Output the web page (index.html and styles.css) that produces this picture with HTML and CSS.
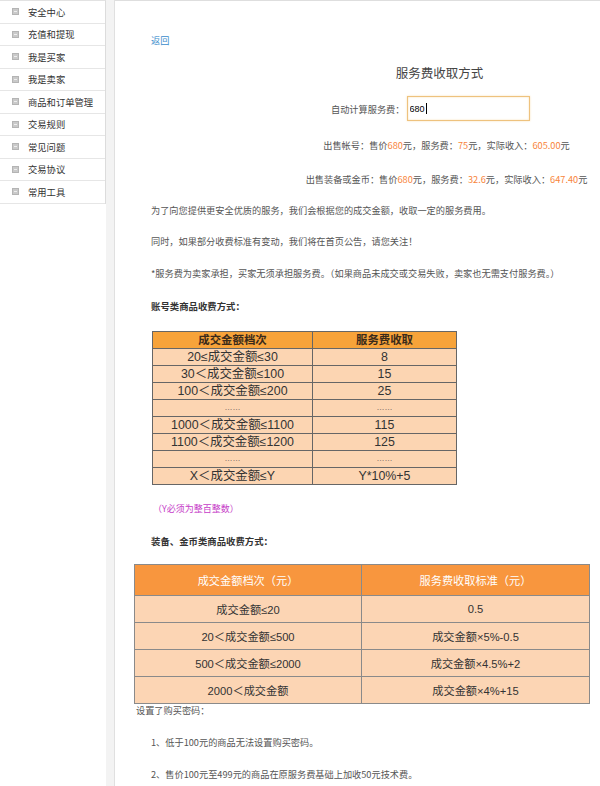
FILE: index.html
```html
<!DOCTYPE html>
<html lang="zh-CN">
<head>
<meta charset="utf-8">
<title>服务费收取方式</title>
<link rel="stylesheet" href="styles.css">
</head>
<body>
<div class="page">
  <ul class="side">
    <li><span class="ico"></span>安全中心</li>
    <li><span class="ico"></span>充值和提现</li>
    <li><span class="ico"></span>我是买家</li>
    <li><span class="ico"></span>我是卖家</li>
    <li><span class="ico"></span>商品和订单管理</li>
    <li><span class="ico"></span>交易规则</li>
    <li><span class="ico"></span>常见问题</li>
    <li><span class="ico"></span>交易协议</li>
    <li><span class="ico"></span>常用工具</li>
  </ul>
  <div class="gap"></div>
  <div class="main">
    <a class="back" href="#">返回</a>
    <h1 class="title">服务费收取方式</h1>
    <div class="calc-row">
      <label class="calc-label" for="fee">自动计算服务费：</label>
      <div class="calc-box"><input id="fee" class="calc-input" type="text" value="680"><span class="caret"></span></div>
    </div>
    <div class="result r1">出售帐号：售价<span class="hl">680</span>元，服务费：<span class="hl">75</span>元，实际收入：<span class="hl">605.00</span>元</div>
    <div class="result r2">出售装备或金币：售价<span class="hl">680</span>元，服务费：<span class="hl">32.6</span>元，实际收入：<span class="hl">647.40</span>元</div>
    <p class="txt p1">为了向您提供更安全优质的服务，我们会根据您的成交金额，收取一定的服务费用。</p>
    <p class="txt p2">同时，如果部分收费标准有变动，我们将在首页公告，请您关注！</p>
    <p class="txt p3">*服务费为卖家承担，买家无须承担服务费。（如果商品未成交或交易失败，卖家也无需支付服务费。）</p>
    <h3 class="sub h1s">账号类商品收费方式：</h3>
    <table class="t1">
      <tr><th>成交金额档次</th><th>服务费收取</th></tr>
      <tr><td>20≤成交金额≤30</td><td>8</td></tr>
      <tr><td>30＜成交金额≤100</td><td>15</td></tr>
      <tr><td>100＜成交金额≤200</td><td>25</td></tr>
      <tr><td class="dots">……</td><td class="dots">……</td></tr>
      <tr><td>1000＜成交金额≤1100</td><td>115</td></tr>
      <tr><td>1100＜成交金额≤1200</td><td>125</td></tr>
      <tr><td class="dots">……</td><td class="dots">……</td></tr>
      <tr><td>X＜成交金额≤Y</td><td>Y*10%+5</td></tr>
    </table>
    <p class="note">（Y必须为整百整数）</p>
    <h3 class="sub h2s">装备、金币类商品收费方式：</h3>
    <table class="t2">
      <tr><th>成交金额档次（元）</th><th>服务费收取标准（元）</th></tr>
      <tr><td>成交金额≤20</td><td>0.5</td></tr>
      <tr><td>20＜成交金额≤500</td><td>成交金额×5%-0.5</td></tr>
      <tr><td>500＜成交金额≤2000</td><td>成交金额×4.5%+2</td></tr>
      <tr><td>2000＜成交金额</td><td>成交金额×4%+15</td></tr>
    </table>
    <p class="txt pw">设置了购买密码：</p>
    <p class="txt li l1">1、低于100元的商品无法设置购买密码。</p>
    <p class="txt li l2">2、售价100元至499元的商品在原服务费基础上加收50元技术费。</p>
  </div>
</div>
</body>
</html>
```

FILE: styles.css
```css
* { box-sizing: border-box; }
html, body { margin: 0; padding: 0; }
body {
  width: 600px;
  height: 786px;
  overflow: hidden;
  background: #fff;
  font-family: "Noto Sans CJK SC", "Noto Sans", sans-serif;
  font-size: 9.2px;
  color: #555;
}
.page {
  display: flex;
  align-items: stretch;
  height: 786px;
}
.side {
  list-style: none;
  margin: 0;
  padding: 0;
  width: 106px;
  flex: none;
  align-self: flex-start;
  border-top: 1px solid #e2e2e2;
  border-right: 1px solid #dcdcdc;
  background: #fff;
}
.side li {
  display: flex;
  align-items: center;
  height: 22.5px;
  border-bottom: 1px solid #e6e6e6;
  padding-left: 12px;
  color: #333;
  font-size: 9.3px;
}
.ico {
  width: 7px;
  height: 7px;
  margin-right: 9px;
  background: #c9c9c9;
  border: 1px solid #b4b4b4;
  position: relative;
  flex: none;
}
.ico::after {
  content: "";
  position: absolute;
  left: 1px;
  right: 1px;
  top: 2px;
  height: 1px;
  background: #eee;
}
.gap {
  width: 9px;
  flex: none;
  background: #f3f3f3;
  border-right: 1px solid #e0e0e0;
}
.main {
  flex: 1;
  min-width: 0;
  border-top: 1px solid #dedede;
  padding: 32px 0 0 36px;
  background: #fff;
}
.back {
  display: block;
  height: 14px;
  line-height: 14px;
  color: #3b8dcc;
  text-decoration: none;
  font-size: 9.2px;
}
.title {
  margin: 16px 0 0;
  height: 20px;
  line-height: 20px;
  padding-left: 128px;
  text-align: center;
  font-size: 12.5px;
  font-weight: normal;
  color: #444;
}
.calc-row {
  display: flex;
  align-items: center;
  margin-top: 13px;
  padding-left: 180px;
  height: 25px;
}
.calc-label {
  color: #555;
  font-size: 9.2px;
  margin-right: 2px;
}
.calc-box {
  position: relative;
  width: 123px;
  height: 25px;
}
.calc-input {
  width: 123px;
  height: 25px;
  border: 1px solid #eec27e;
  box-shadow: inset 0 0 2px #f7dcae, 0 0 2px #f8e2bc;
  padding: 0 2px;
  font-family: "Liberation Sans", sans-serif;
  font-size: 9px;
  color: #000;
  outline: none;
}
.caret {
  position: absolute;
  left: 19px;
  top: 7px;
  width: 1px;
  height: 11px;
  background: #000;
}
.result {
  height: 16px;
  line-height: 16px;
  text-align: center;
  padding-left: 142px;
  color: #555;
  white-space: nowrap;
}
.r1 { margin-top: 16px; }
.r2 { margin-top: 18px; }
.hl { color: #f8843a; }
.txt {
  margin: 0;
  height: 16px;
  line-height: 16px;
  white-space: nowrap;
  color: #555;
}
.p1 { margin-top: 15px; }
.p2 { margin-top: 15px; }
.p3 { margin-top: 16px; }
.sub {
  margin: 0;
  height: 16px;
  line-height: 16px;
  font-size: 9.4px;
  font-weight: bold;
  color: #333;
}
.h1s { margin-top: 17px; }
.h2s { margin-top: 16px; }
.t1 {
  margin: 17px 0 0 1px;
  border-collapse: collapse;
  width: 305px;
  font-family: "Liberation Sans", "Noto Sans CJK SC", sans-serif;
  font-size: 12.4px;
  color: #333;
}
.t1 th, .t1 td {
  border: 1px solid #666;
  height: 17px;
  padding: 0;
  line-height: 14px;
  text-align: center;
  background: #fcd5b2;
  font-weight: normal;
}
.t1 th {
  background: #f7a33a;
  font-weight: bold;
  font-size: 11.4px;
  color: #3a2a1a;
}
.t1 th:first-child, .t1 td:first-child { width: 160px; }
.t1 .dots { font-size: 8px; color: #444; }
.note {
  margin: 16px 0 0 2px;
  height: 16px;
  line-height: 16px;
  color: #c63cc8;
  font-size: 9px;
}
.t2 {
  margin: 15px 0 0 -17px;
  border-collapse: collapse;
  width: 456px;
  font-family: "Liberation Sans", "Noto Sans CJK SC", sans-serif;
  font-size: 11.2px;
  color: #333;
}
.t2 th, .t2 td {
  border: 1px solid #8a8a8a;
  padding: 0;
  text-align: center;
  background: #fcd5b4;
  font-weight: normal;
}
.t2 td { height: 27px; }
.t2 th {
  height: 31px;
  background: #f8963e;
  color: #fff;
}
.t2 th:first-child, .t2 td:first-child { width: 227px; }
.pw {
  margin-top: -1px;
  margin-left: -15px;
  height: 14px;
  line-height: 14px;
}
.l1 { margin-top: 17px; }
.l2 { margin-top: 16px; }
```
